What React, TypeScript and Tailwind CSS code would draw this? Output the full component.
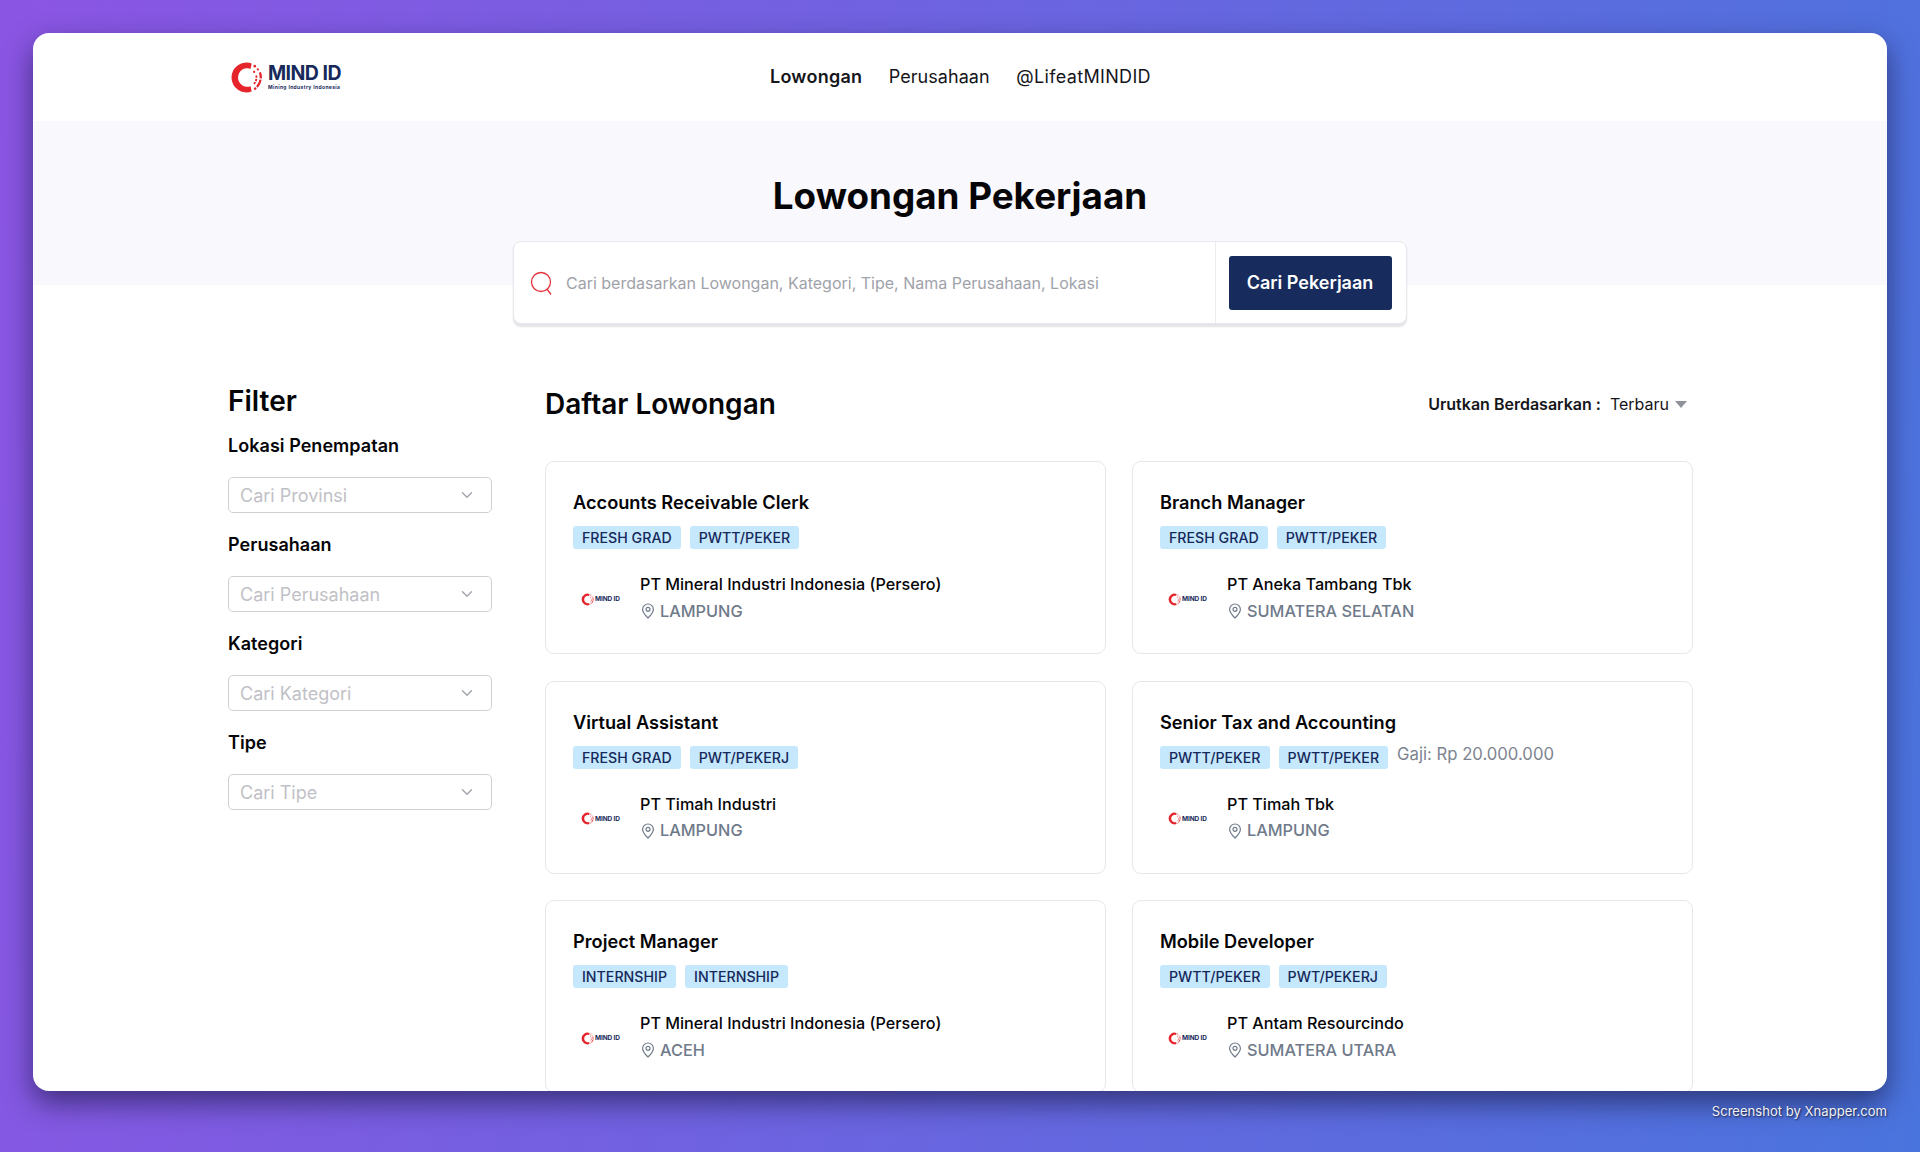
import React from "react";
import { ChevronDown } from "lucide-react";

function LogoRing({ size }: { size: number }) {
  return (
    <svg width={size} height={size} viewBox="0 0 32 32" className="shrink-0">
      <path d="M21 2.4 A14.5 14.5 0 1 0 21 29.6 L20 24.4 A9 9 0 1 1 20 7.6 Z" fill="#e5242c" />
      <circle cx="24" cy="5" r="1.3" fill="#e5242c" />
      <circle cx="27" cy="8.2" r="1.1" fill="#e5242c" />
      <circle cx="23.4" cy="10.6" r="1.1" fill="#e5242c" />
      <path d="M29 11 A14 14 0 0 1 23.5 27.5" fill="none" stroke="#e5242c" strokeWidth="2.2" strokeDasharray="6 1.2 8 1.2 14" />
      <path d="M25.4 14 A9 9 0 0 1 23 22.5" fill="none" stroke="#e5242c" strokeWidth="1.8" strokeDasharray="2.2 1.1" />
    </svg>
  );
}

function BigLogo() {
  return (
    <div className="flex items-center gap-[5px] w-[114px]">
      <LogoRing size={33} />
      <div className="flex flex-col">
        <span className="text-[19.5px] leading-[19px] font-bold text-[#17295b] tracking-[-0.55px] whitespace-nowrap">MIND ID</span>
        <span className="text-[5px] leading-[6px] font-bold text-[#17295b] tracking-[0.35px] whitespace-nowrap mt-[1px]">Mining Industry Indonesia</span>
      </div>
    </div>
  );
}

function SmallLogo() {
  return (
    <div className="flex items-center gap-[1px] w-[67px] pl-[8px] mt-[3px] shrink-0">
      <LogoRing size={13} />
      <span className="text-[6.5px] leading-[10px] font-bold text-[#17295b] tracking-[-0.1px] whitespace-nowrap">MIND ID</span>
    </div>
  );
}

function Select({ label, placeholder }: { label: string; placeholder: string }) {
  return (
    <div className="flex flex-col">
      <div className="h-[24px] leading-[24px] text-[18px] tracking-[0.04px] font-semibold text-[#050508]">{label}</div>
      <div className="mt-[19px] h-[36px] border border-[#cfd1d6] rounded-[5px] flex items-center justify-between pl-[11px] pr-[15px]">
        <span className="text-[18px] text-[#bfc1c6]">{placeholder}</span>
        <ChevronDown size={18} strokeWidth={2} className="text-[#a4a7ae]" />
      </div>
    </div>
  );
}

type Job = { title: string; tags: string[]; company: string; loc: string; salary?: string };

const jobs: Job[] = [
  { title: "Accounts Receivable Clerk", tags: ["FRESH GRAD", "PWTT/PEKER"], company: "PT Mineral Industri Indonesia (Persero)", loc: "LAMPUNG" },
  { title: "Branch Manager", tags: ["FRESH GRAD", "PWTT/PEKER"], company: "PT Aneka Tambang Tbk", loc: "SUMATERA SELATAN" },
  { title: "Virtual Assistant", tags: ["FRESH GRAD", "PWT/PEKERJ"], company: "PT Timah Industri", loc: "LAMPUNG" },
  { title: "Senior Tax and Accounting", tags: ["PWTT/PEKER", "PWTT/PEKER"], company: "PT Timah Tbk", loc: "LAMPUNG", salary: "Gaji: Rp 20.000.000" },
  { title: "Project Manager", tags: ["INTERNSHIP", "INTERNSHIP"], company: "PT Mineral Industri Indonesia (Persero)", loc: "ACEH" },
  { title: "Mobile Developer", tags: ["PWTT/PEKER", "PWT/PEKERJ"], company: "PT Antam Resourcindo", loc: "SUMATERA UTARA" },
];

function Pin() {
  return (
    <svg width="14" height="16" viewBox="0 0 14 16" fill="none" stroke="#6f7a8a" strokeWidth="1.2" className="shrink-0 ml-[1px]">
      <path d="M7 15 C4 12 1.6 9.4 1.6 6.4 A5.4 5.4 0 0 1 12.4 6.4 C12.4 9.4 10 12 7 15 Z" />
      <circle cx="7" cy="6.3" r="2" />
    </svg>
  );
}

function Card({ job }: { job: Job }) {
  return (
    <div className="h-[193px] border border-[#e6e7ec] rounded-[9px] pt-[28px] pl-[27px] pr-[20px] bg-white">
      <div className="h-[24px] leading-[24px] text-[18.2px] font-semibold text-[#050508]">{job.title}</div>
      <div className="mt-[12px] flex items-start gap-[9px]">
        {job.tags.map((t, i) => (
          <span key={i} className="h-[23px] leading-[23px] px-[9px] rounded-[3px] bg-[#c5e8fd] text-[14.2px] font-medium text-[#17295b] whitespace-nowrap">{t}</span>
        ))}
        {job.salary && <span className="text-[16.7px] leading-[20px] text-[#7d8490] -mt-[2px]">{job.salary}</span>}
      </div>
      <div className="mt-[23px] flex items-center">
        <SmallLogo />
        <div className="flex flex-col">
          <div className="h-[24px] leading-[24px] text-[16.2px] font-medium text-[#050508] whitespace-nowrap">{job.company}</div>
          <div className="mt-[3px] h-[24px] flex items-center gap-[5px] text-[16.3px] font-medium text-[#6f7a8a] whitespace-nowrap"><Pin />{job.loc}</div>
        </div>
      </div>
    </div>
  );
}

export default function App() {
  return (
    <div className="relative w-[1920px] h-[1152px] overflow-hidden p-[33px] pb-0 bg-[linear-gradient(100deg,#8b55e3_0%,#4a74dd_100%)] font-['Inter',sans-serif]">
      <div className="w-[1854px] h-[1058px] overflow-hidden rounded-[16px] bg-white shadow-[0_12px_28px_rgba(20,20,60,0.6)]">
        <nav className="h-[88px] flex items-center pl-[197px]">
          <BigLogo />
          <div className="ml-[426px] -mt-[2px] flex items-center gap-[26.5px] text-[18px] text-[#15151a]">
            <span className="font-semibold tracking-[0.25px]">Lowongan</span>
            <span className="tracking-[0.05px]">Perusahaan</span>
            <span className="tracking-[0.35px]">@LifeatMINDID</span>
          </div>
        </nav>
        <section className="h-[164px] bg-[#f8f8fd] flex flex-col items-center pt-[52px]">
          <h1 className="h-[46px] leading-[46px] text-[36.8px] font-bold text-[#050508]">Lowongan Pekerjaan</h1>
          <div className="mt-[22px] w-[894px] h-[83px] shrink-0 bg-white rounded-[8px] border border-[#e8e8ee] shadow-[0_3px_2px_rgba(40,40,80,0.13)] flex items-center">
            <div className="flex-1 flex items-center pl-[16px] gap-[12px]">
              <svg width="24" height="24" viewBox="0 0 24 24" fill="none" stroke="#e5343c" strokeWidth="1.3" className="shrink-0">
                <circle cx="11" cy="11" r="9.5" />
                <path d="M17 18 L21 23.5" />
              </svg>
              <span className="text-[16px] text-[#9fa2aa] whitespace-nowrap">Cari berdasarkan Lowongan, Kategori, Tipe, Nama Perusahaan, Lokasi</span>
            </div>
            <div className="h-full w-[191px] border-l border-[#eceded] flex items-center justify-center pr-[2px]">
              <div className="w-[163px] h-[54px] rounded-[3px] bg-[#172c5c] flex items-center justify-center text-[18px] font-semibold text-white">Cari Pekerjaan</div>
            </div>
          </div>
        </section>
        <main className="flex pl-[195px] pt-[112px] gap-[53px]">
          <aside className="w-[264px] shrink-0 flex flex-col">
            <div className="-mt-[13px] h-[34px] leading-[34px] text-[28px] font-semibold text-[#050508]">Filter</div>
            <div className="mt-[16px] flex flex-col gap-[20px]">
              <Select label="Lokasi Penempatan" placeholder="Cari Provinsi" />
              <Select label="Perusahaan" placeholder="Cari Perusahaan" />
              <Select label="Kategori" placeholder="Cari Kategori" />
              <Select label="Tipe" placeholder="Cari Tipe" />
            </div>
          </aside>
          <div className="w-[1148px] shrink-0">
            <div className="-mt-[10px] h-[34px] flex items-center justify-between pr-[6px]">
              <h2 className="text-[28px] font-semibold text-[#050508]">Daftar Lowongan</h2>
              <div className="flex items-center text-[16px] text-[#15151a]">
                <span className="font-semibold">Urutkan Berdasarkan :</span>
                <span className="ml-[9px]">Terbaru</span>
                <svg width="12" height="7" viewBox="0 0 12 7" className="ml-[6px]"><path d="M0 0 H12 L6 7 Z" fill="#8f929a" /></svg>
              </div>
            </div>
            <div className="mt-[40px] grid grid-cols-2 gap-x-[26px] gap-y-[26.5px]">
              {jobs.map((j, i) => <Card key={i} job={j} />)}
            </div>
          </div>
        </main>
      </div>
      <div className="absolute right-[33px] top-[1103px] text-[13.1px] leading-[17px] text-[#f0f0f5] [text-shadow:1px_1px_2px_rgba(0,0,0,0.7)]">Screenshot by Xnapper.com</div>
    </div>
  );
}
